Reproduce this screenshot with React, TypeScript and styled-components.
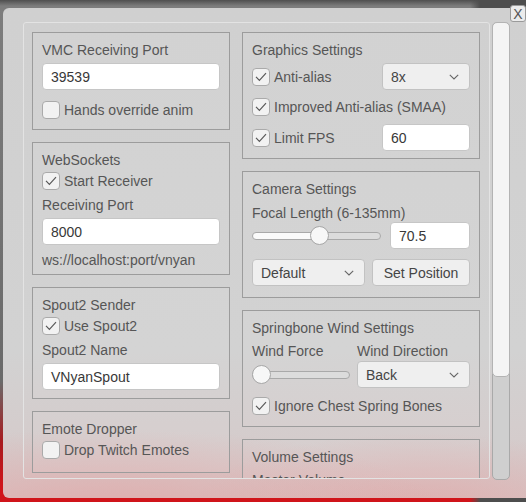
import React from "react";
import styled, { createGlobalStyle } from "styled-components";

const Global = createGlobalStyle`
  html, body { margin: 0; padding: 0; }
  body {
    width: 526px;
    height: 502px;
    overflow: hidden;
    background: #5e5e5e;
    font-family: "Liberation Sans", Arial, sans-serif;
  }
`;

const Stage = styled.div`
  position: relative;
  width: 526px;
  height: 502px;
  overflow: hidden;
  box-sizing: border-box;
  padding: 8px 0 4px 3px;
  display: flex;
  flex-direction: column;
  background:
    linear-gradient(90deg, rgba(255,255,255,0) 0, rgba(255,255,255,0) 470px, #4d4d4d 480px),
    linear-gradient(to bottom, #4f4f4f 0, #7d7d7d 6px, #6a6a6a 76%, #a81a1e 88%, #d0141a 97%);
`;

const Window = styled.div`
  flex: 1;
  width: 540px;
  box-sizing: border-box;
  border-radius: 6px 0 0 6px;
  padding: 14px 0 0 20px;
  display: flex;
  gap: 2px;
  align-items: flex-start;
  background:
    radial-gradient(ellipse 330px 85px at 110px 505px, rgba(228,160,160,0.7), rgba(228,160,160,0) 100%),
    radial-gradient(ellipse 230px 75px at 420px 500px, rgba(228,160,160,0.62), rgba(228,160,160,0) 100%),
    linear-gradient(to bottom, #d0d0d0 0, #d2d2d2 70%, #d6c8c8 100%);
`;

const ScrollPanel = styled.div`
  width: 467px;
  height: 457px;
  box-sizing: border-box;
  border: 1px solid #e3e3e3;
  border-radius: 3px;
  overflow: hidden;
  padding: 9px 0 0 8px;
  display: grid;
  grid-template-columns: 198px 238px;
  column-gap: 12px;
  align-items: start;
`;

const Column = styled.div`
  display: flex;
  flex-direction: column;
  gap: 12px;
`;

const Box = styled.section<{ $pb: number }>`
  border: 1px solid #9c9c9c;
  padding: 8px 9px ${(p) => p.$pb}px 9px;
  display: flex;
  flex-direction: column;
  background: rgba(255, 255, 255, 0.06);
`;

const Title = styled.div`
  font-size: 14px;
  line-height: 18px;
  height: 18px;
  flex: none;
  color: #565656;
  white-space: nowrap;
`;

const Label = styled.div<{ $mt?: number }>`
  font-size: 14px;
  line-height: 18px;
  height: 18px;
  flex: none;
  color: #565656;
  white-space: nowrap;
  margin-top: ${(p) => p.$mt ?? 0}px;
`;

const TextField = styled.div<{ $mt?: number; $w?: number }>`
  height: 27px;
  flex: none;
  box-sizing: border-box;
  ${(p) => (p.$w ? `width: ${p.$w}px;` : "")}
  margin-top: ${(p) => p.$mt ?? 0}px;
  border: 1px solid #c6c6c6;
  border-radius: 4px;
  background: #ffffff;
  padding: 0 8px;
  display: flex;
  align-items: center;
  font-size: 14px;
  color: #383838;
`;

const Dropdown = styled.div<{ $w?: number }>`
  height: 27px;
  box-sizing: border-box;
  ${(p) => (p.$w ? `width: ${p.$w}px; flex: none;` : "flex: 1;")}
  border: 1px solid #c2c2c2;
  border-radius: 4px;
  background: #efefef;
  padding: 0 10px 0 8px;
  display: flex;
  align-items: center;
  justify-content: space-between;
  font-size: 14px;
  color: #454545;
`;

const Button = styled.div<{ $w: number }>`
  height: 27px;
  box-sizing: border-box;
  width: ${(p) => p.$w}px;
  flex: none;
  border: 1px solid #c2c2c2;
  border-radius: 4px;
  background: #efefef;
  display: flex;
  align-items: center;
  justify-content: center;
  font-size: 14px;
  color: #454545;
`;

const CheckRow = styled.div<{ $mt?: number; $grow?: boolean }>`
  height: 20px;
  display: flex;
  align-items: center;
  gap: 4px;
  margin-top: ${(p) => p.$mt ?? 0}px;
  font-size: 14px;
  color: #565656;
  white-space: nowrap;
  flex: ${(p) => (p.$grow ? "1 1 auto" : "none")};
  min-width: 0;
`;

const CheckBox = styled.span`
  width: 18px;
  height: 18px;
  box-sizing: border-box;
  flex: none;
  border: 1px solid #aaaaaa;
  border-radius: 4px;
  background: #f2f2f2;
  display: flex;
  align-items: center;
  justify-content: center;
`;

const Row = styled.div<{ $mt?: number; $gap: number }>`
  display: flex;
  flex: none;
  align-items: center;
  gap: ${(p) => p.$gap}px;
  margin-top: ${(p) => p.$mt ?? 0}px;
`;

const Grid2 = styled.div<{ $mt?: number }>`
  display: grid;
  flex: none;
  grid-template-columns: 98px 1fr;
  column-gap: 7px;
  align-items: center;
  margin-top: ${(p) => p.$mt ?? 0}px;
`;

const SliderWrap = styled.div`
  position: relative;
  flex: 1;
  height: 27px;
  display: flex;
  align-items: center;
`;

const Track = styled.div`
  width: 100%;
  height: 8px;
  box-sizing: border-box;
  border: 1px solid #a9a9a9;
  border-radius: 4px;
`;

const Knob = styled.div`
  position: absolute;
  top: 4px;
  width: 19px;
  height: 19px;
  box-sizing: border-box;
  border-radius: 50%;
  border: 1px solid #a6a6a6;
  background: #f7f7f7;
`;

const ScrollBar = styled.div`
  width: 18px;
  height: 458px;
  box-sizing: border-box;
  border: 1px solid #a9a9a9;
  border-radius: 5px;
  background: #cfcfcf;
  display: flex;
  flex-direction: column;
`;

const Thumb = styled.div`
  height: 353px;
  margin: -1px -1px 0 -1px;
  border: 1px solid #b3b3b3;
  border-radius: 5px;
  background: #f4f4f4;
`;

const CloseButton = styled.div`
  position: absolute;
  top: 5px;
  left: 510px;
  width: 16px;
  height: 17px;
  box-sizing: border-box;
  border: 1px solid #9a9a9a;
  border-radius: 3px;
  background: #ececec;
  display: flex;
  align-items: center;
  justify-content: center;
  font-size: 14px;
  line-height: 1;
  color: #555;
`;

const Check = ({ on }: { on?: boolean }) => (
  <CheckBox>
    {on && (
      <svg width="12" height="10" viewBox="0 0 12 10">
        <polyline points="1,4.8 4.4,8.4 11,1.2" fill="none" stroke="#5a5a5a" strokeWidth="1.2" />
      </svg>
    )}
  </CheckBox>
);

const Chevron = () => (
  <svg width="10" height="6" viewBox="0 0 10 6">
    <polyline points="0.8,0.8 5,5 9.2,0.8" fill="none" stroke="#666" strokeWidth="1.1" />
  </svg>
);

const Slider = ({ fraction }: { fraction: number }) => {
  const pct = fraction * 100;
  return (
    <SliderWrap>
      <Track
        style={{
          background: `linear-gradient(to right, #fafafa 0, #fafafa ${pct}%, #dcdcdc ${pct}%, #dcdcdc 100%)`,
        }}
      />
      <Knob style={{ left: `calc((100% - 19px) * ${fraction})` }} />
    </SliderWrap>
  );
};

export default function App() {
  return (
    <>
      <Global />
      <Stage>
        <Window>
          <ScrollPanel>
            <Column>
              <Box $pb={9}>
                <Title>VMC Receiving Port</Title>
                <TextField $mt={4}>39539</TextField>
                <CheckRow $mt={10}>
                  <Check />
                  Hands override anim
                </CheckRow>
              </Box>
              <Box $pb={5}>
                <Title>WebSockets</Title>
                <CheckRow $mt={2}>
                  <Check on />
                  Start Receiver
                </CheckRow>
                <Label $mt={5}>Receiving Port</Label>
                <TextField $mt={4}>8000</TextField>
                <Label $mt={6}>ws://localhost:port/vnyan</Label>
              </Box>
              <Box $pb={8}>
                <Title>Spout2 Sender</Title>
                <CheckRow $mt={2}>
                  <Check on />
                  Use Spout2
                </CheckRow>
                <Label $mt={5}>Spout2 Name</Label>
                <TextField $mt={4}>VNyanSpout</TextField>
              </Box>
              <Box $pb={12}>
                <Title>Emote Dropper</Title>
                <CheckRow $mt={2}>
                  <Check />
                  Drop Twitch Emotes
                </CheckRow>
              </Box>
            </Column>
            <Column>
              <Box $pb={7}>
                <Title>Graphics Settings</Title>
                <Row $mt={4} $gap={0}>
                  <CheckRow $grow>
                    <Check on />
                    Anti-alias
                  </CheckRow>
                  <Dropdown $w={88}>
                    8x
                    <Chevron />
                  </Dropdown>
                </Row>
                <CheckRow $mt={7}>
                  <Check on />
                  Improved Anti-alias (SMAA)
                </CheckRow>
                <Row $mt={7} $gap={0}>
                  <CheckRow $grow>
                    <Check on />
                    Limit FPS
                  </CheckRow>
                  <TextField $w={88}>60</TextField>
                </Row>
              </Box>
              <Box $pb={11}>
                <Title>Camera Settings</Title>
                <Label $mt={6}>Focal Length (6-135mm)</Label>
                <Row $gap={9}>
                  <Slider fraction={0.53} />
                  <TextField $w={80}>70.5</TextField>
                </Row>
                <Row $mt={10} $gap={7}>
                  <Dropdown>
                    Default
                    <Chevron />
                  </Dropdown>
                  <Button $w={98}>Set Position</Button>
                </Row>
              </Box>
              <Box $pb={10}>
                <Title>Springbone Wind Settings</Title>
                <Grid2 $mt={5}>
                  <Label>Wind Force</Label>
                  <Label>Wind Direction</Label>
                </Grid2>
                <Grid2 $mt={1}>
                  <Slider fraction={0} />
                  <Dropdown>
                    Back
                    <Chevron />
                  </Dropdown>
                </Grid2>
                <CheckRow $mt={8}>
                  <Check on />
                  Ignore Chest Spring Bones
                </CheckRow>
              </Box>
              <Box $pb={9}>
                <Title>Volume Settings</Title>
                <Label $mt={5}>Master Volume</Label>
                <Slider fraction={0.8} />
              </Box>
            </Column>
          </ScrollPanel>
          <ScrollBar>
            <Thumb />
          </ScrollBar>
        </Window>
        <CloseButton>X</CloseButton>
      </Stage>
    </>
  );
}
